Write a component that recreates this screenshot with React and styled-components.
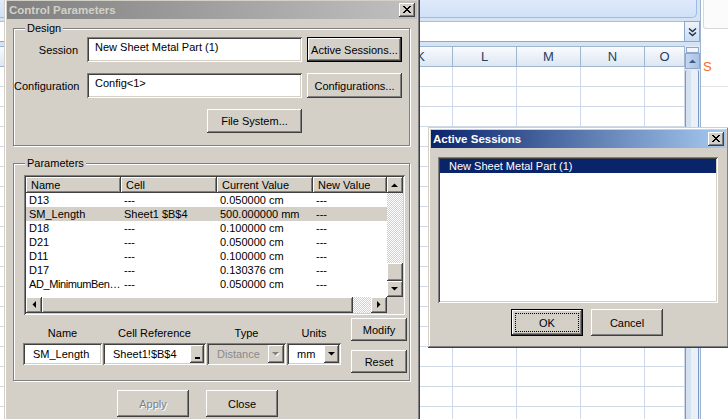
import React from 'react';
import styled, { createGlobalStyle, css } from 'styled-components';

const GlobalStyle = createGlobalStyle`
  html, body {
    margin: 0;
    padding: 0;
  }
  body {
    width: 728px;
    height: 419px;
    overflow: hidden;
    background: #fff;
    font-family: 'Liberation Sans', Arial, sans-serif;
    font-size: 11px;
    color: #000;
  }
  * {
    box-sizing: border-box;
  }
`;

// classic 3d edges
const raised = css`
  background: #d4d0c8;
  box-shadow: inset -1px -1px #404040, inset 1px 1px #fff, inset -2px -2px #808080,
    inset 2px 2px #d4d0c8;
`;

const sunken = css`
  box-shadow: inset 1px 1px #808080, inset -1px -1px #fff, inset 2px 2px #404040,
    inset -2px -2px #d4d0c8;
`;

const checker = css`
  background-color: #fff;
  background-image: conic-gradient(#d4d0c8 25%, #fff 0 50%, #d4d0c8 0 75%, #fff 0);
  background-size: 2px 2px;
`;

// columns E..J sit under the dialog, so only K..O carry a letter
const COLS = ['', '', '', '', '', '', '', 'K', 'L', 'M', 'N', 'O'];
const SHEET_ROWS = Array.from({ length: 18 }, (_, i) => i);

const params = [
  ['D13', '---', '0.050000 cm', '---'],
  ['SM_Length', 'Sheet1 $B$4', '500.000000 mm', '---'],
  ['D18', '---', '0.100000 cm', '---'],
  ['D21', '---', '0.050000 cm', '---'],
  ['D11', '---', '0.100000 cm', '---'],
  ['D17', '---', '0.130376 cm', '---'],
  ['AD_MinimumBen…', '---', '0.050000 cm', '---'],
];

/* ---------- little drawings ---------- */

const Tri = ({ dir = 'down', color = '#000', shadow }) => {
  const pts = {
    up: '0,4 7,4 3.5,0.5',
    down: '0,0 7,0 3.5,3.5',
    left: '4,0 4,7 0.5,3.5',
    right: '0,0 0,7 3.5,3.5',
  }[dir];
  const vertical = dir === 'up' || dir === 'down';
  return (
    <svg
      width={vertical ? 8 : 5}
      height={vertical ? 5 : 8}
      viewBox={vertical ? '0 0 8 5' : '0 0 5 8'}
      style={{ display: 'block', overflow: 'visible' }}
    >
      {shadow && <polygon points={pts} fill="#fff" transform="translate(1 1)" />}
      <polygon points={pts} fill={color} />
    </svg>
  );
};

const closeGlyph = [
  'XX....XX',
  '.XX..XX.',
  '..XXXX..',
  '...XX...',
  '..XXXX..',
  '.XX..XX.',
  'XX....XX',
];

const CloseX = () => (
  <svg width="8" height="7" viewBox="0 0 8 7" shapeRendering="crispEdges">
    {closeGlyph.map((row, y) =>
      row.split('').map((c, x) =>
        c === 'X' ? <rect key={`${x}-${y}`} x={x} y={y} width="1" height="1" fill="#000" /> : null
      )
    )}
  </svg>
);

const Chevrons = () => (
  <svg width="9" height="10" viewBox="0 0 9 10">
    <path d="M1 1.5 L4.5 4.5 L8 1.5 M1 5.5 L4.5 8.5 L8 5.5" stroke="#20303f" strokeWidth="1.4" fill="none" />
  </svg>
);

/* ---------- spreadsheet behind ---------- */

const Desktop = styled.div`
  position: relative;
  width: 728px;
  height: 419px;
  overflow: hidden;
  background: #fff;
`;

const Sheet = styled.div`
  display: flex;
  height: 100%;
`;

const SheetMain = styled.div`
  width: 701px;
  flex-shrink: 0;
  display: flex;
  flex-direction: column;
  background: #d5e3f5;
  border-right: 1px solid #9db4d0;
`;

const RibbonEdge = styled.div`
  height: 18px;
  flex-shrink: 0;
  margin-right: 3px;
  background: linear-gradient(#dfeafa, #cfe1f7);
  border: 1px solid #9fbbe3;
  border-top: none;
  border-left: none;
  border-radius: 0 0 5px 0;
`;

const FormulaBar = styled.div`
  display: flex;
  height: 21px;
  flex-shrink: 0;
  margin-top: 3px;
`;

const FormulaInput = styled.div`
  flex: 1;
  background: #fff;
  border-top: 1px solid #a9bfd9;
  border-bottom: 1px solid #8ea8cc;
`;

const ExpandButton = styled.div`
  width: 16px;
  display: flex;
  align-items: center;
  justify-content: center;
  background: linear-gradient(#eef4fc, #c9dcf3);
  border: 1px solid #8ea8cc;
`;

const GridArea = styled.div`
  flex: 1;
  display: flex;
  margin-top: 4px;
  min-height: 0;
`;

const Cells = styled.div`
  width: 685px;
  display: flex;
  flex-direction: column;
`;

const SheetRow = styled.div`
  display: grid;
  grid-template-columns: 5px repeat(10, 64px) 40px;
  height: ${(p) => (p.$header ? 21 : 20)}px;
  flex-shrink: 0;
  ${(p) => p.$header && 'border-top: 1px solid #9eb6ce;'}
`;

const ColHeader = styled.div`
  display: flex;
  align-items: center;
  justify-content: center;
  background: linear-gradient(#f9fbfe, #dde6f2);
  border-right: 1px solid #9eb6ce;
  border-bottom: 1px solid #9eb6ce;
  color: #27415f;
  font-size: 13px;
  overflow: hidden;
`;

const Cell = styled.div`
  background: #fff;
  border-right: 1px solid #d0d7e5;
  border-bottom: 1px solid #d0d7e5;
`;

const SheetScroll = styled.div`
  width: 15px;
  display: flex;
  flex-direction: column;
  background: #e4ecf7;
`;

const SplitBox = styled.div`
  height: 6px;
  flex-shrink: 0;
  margin: 1px 1px 0;
  border: 1px solid #8ea8cc;
  background: #f2f6fb;
`;

const SheetArrow = styled.div`
  height: 16px;
  flex-shrink: 0;
  display: flex;
  align-items: center;
  justify-content: center;
  background: linear-gradient(to right, #c5d6ee, #a9c1e3);
  border: 1px solid #8ea8cc;
`;

const SheetThumb = styled.div`
  flex: 1;
  margin-top: 1px;
  border-left: 1px solid #7c97c6;
  border-right: 1px solid #7c97c6;
  margin-right: 1px;
  background: linear-gradient(to right, #d6e1f0 0 45%, #eaf0f8 45% 100%);
  border-radius: 2px 2px 0 0;
`;

const SidePane = styled.div`
  flex: 1;
  display: flex;
  flex-direction: column;
  background: #fff;
  overflow: hidden;
`;

const PaneTab = styled.div`
  height: 29px;
  margin-left: 2px;
  width: 40px;
  flex-shrink: 0;
  border: 1px solid #d8d8d8;
  border-top: none;
  border-radius: 0 0 3px 3px;
  background: #fbfbfb;
`;

const PaneLetter = styled.div`
  margin-top: 31px;
  padding-left: 2px;
  color: #f26b1d;
  font-size: 13px;
  line-height: 14px;
`;

const PaneRule = styled.div`
  margin-top: 12px;
  border-top: 1px solid #e2e2e2;
`;

/* ---------- windows ---------- */

const Window = styled.div`
  position: absolute;
  left: ${(p) => p.$left}px;
  top: ${(p) => p.$top}px;
  width: ${(p) => p.$width}px;
  height: ${(p) => p.$height}px;
  padding: 3px;
  display: flex;
  flex-direction: column;
  background: #d4d0c8;
  box-shadow: inset -1px -1px #404040, inset 1px 1px #d4d0c8, inset -2px -2px #808080,
    inset 2px 2px #fff;
`;

const TitleBar = styled.div`
  height: 18px;
  flex-shrink: 0;
  display: flex;
  align-items: center;
  padding-left: 2px;
  background: ${(p) =>
    p.$active
      ? 'linear-gradient(to right, #0a246a, #a6caf0)'
      : 'linear-gradient(to right, #808080, #c0c0c0)'};
  color: ${(p) => (p.$active ? '#fff' : '#d4d0c8')};
  font-weight: bold;
  font-size: 11.5px;
`;

const TitleText = styled.span`
  flex: 1;
  white-space: nowrap;
`;

const CloseButton = styled.div`
  ${raised};
  width: 16px;
  height: 14px;
  margin-right: 2px;
  display: flex;
  align-items: center;
  justify-content: center;
  padding-bottom: 1px;
`;

const Btn = styled.button`
  ${raised};
  width: ${(p) => p.$w}px;
  height: ${(p) => p.$h}px;
  flex-shrink: 0;
  padding: 0;
  border: none;
  font-family: inherit;
  font-size: 11px;
  color: #000;
  white-space: nowrap;
  ${(p) =>
    p.$default &&
    css`
      box-shadow: inset 0 0 0 1px #000, inset -2px -2px #404040, inset 2px 2px #fff,
        inset -3px -3px #808080;
    `}
  ${(p) =>
    p.$focus &&
    css`
      outline: 1px dotted #000;
      outline-offset: -5px;
    `}
  &:disabled {
    color: #808080;
    text-shadow: 1px 1px #fff;
  }
`;

/* ---------- Control Parameters ---------- */

const DialogBody = styled.div`
  flex: 1;
  display: flex;
  flex-direction: column;
  padding-top: 3px;
`;

const Group = styled.fieldset`
  margin: ${(p) => p.$mt || 0}px 7px 0 6px;
  padding: 2px 0 ${(p) => p.$pb}px 0;
  min-width: 0;
  border: 1px solid #808080;
  box-shadow: 1px 1px 0 #fff, inset 1px 1px 0 #fff;
`;

const Legend = styled.legend`
  margin-left: 11px;
  padding: 0 2px;
  line-height: 13px;
  font-size: 11px;
  background: #d4d0c8;
`;

const DesignRows = styled.div`
  display: flex;
  flex-direction: column;
  gap: 11px;
`;

const FormRow = styled.div`
  display: flex;
  align-items: center;
  padding-left: ${(p) => p.$indent || 0}px;
`;

const RowLabel = styled.div`
  width: 64px;
  margin-right: 9px;
  text-align: right;
  white-space: nowrap;
`;

const TextBox = styled.div`
  ${sunken};
  width: ${(p) => p.$w}px;
  height: ${(p) => p.$h}px;
  margin-right: 5px;
  padding: 4px 0 0 8px;
  background: #fff;
  white-space: nowrap;
  overflow: hidden;
  line-height: 13px;
`;

const ListView = styled.div`
  ${sunken};
  width: 381px;
  height: 140px;
  margin: 3px 0 0 10px;
  padding: 2px;
  display: grid;
  grid-template-columns: 361px 16px;
  grid-template-rows: 120px 16px;
  background: #fff;
`;

const ListContent = styled.div`
  display: flex;
  flex-direction: column;
  overflow: hidden;
`;

const ListRow = styled.div`
  display: grid;
  grid-template-columns: 95px 96px 96px 74px;
  height: ${(p) => (p.$header ? 16 : 14)}px;
  flex-shrink: 0;
  background: ${(p) => (p.$selected ? '#d4d0c8' : 'transparent')};
`;

const HeadCell = styled.div`
  ${raised};
  padding: 2px 0 0 5px;
  line-height: 12px;
  white-space: nowrap;
  overflow: hidden;
`;

const ListCell = styled.div`
  padding-left: 3px;
  line-height: 14px;
  white-space: nowrap;
  letter-spacing: ${(p) => (p.$name ? '-0.4px' : 'normal')};
`;

const VScroll = styled.div`
  display: flex;
  flex-direction: column;
`;

const HScroll = styled.div`
  display: flex;
`;

const ScrollArrow = styled.div`
  ${raised};
  width: 16px;
  height: 16px;
  flex-shrink: 0;
  display: flex;
  align-items: center;
  justify-content: center;
`;

const ScrollTrack = styled.div`
  ${checker};
  flex: ${(p) => (p.$size ? `0 0 ${p.$size}px` : 1)};
`;

const ScrollThumb = styled.div`
  ${raised};
  flex: ${(p) => (p.$size ? `0 0 ${p.$size}px` : 1)};
`;

const Corner = styled.div`
  background: #d4d0c8;
`;

const EditArea = styled.div`
  display: flex;
  margin-top: 3px;
`;

const EditFields = styled.div`
  display: grid;
  grid-template-columns: 79px 103px 79px 54px;
  grid-template-rows: 13px 22px;
  column-gap: 1px;
  row-gap: 3px;
  margin: 9px 0 0 9px;
`;

const FieldCaption = styled.div`
  text-align: center;
  line-height: 13px;
  white-space: nowrap;
`;

const EditBox = styled.div`
  ${sunken};
  display: flex;
  align-items: center;
  padding: 2px;
  background: ${(p) => (p.$disabled ? '#d4d0c8' : '#fff')};
  color: ${(p) => (p.$disabled ? '#8a8a8a' : '#000')};
`;

const EditText = styled.span`
  flex: 1;
  padding-left: 8px;
  white-space: nowrap;
  overflow: hidden;
`;

const MiniButton = styled.div`
  ${raised};
  width: ${(p) => p.$w}px;
  height: 18px;
  flex-shrink: 0;
  display: flex;
  align-items: ${(p) => (p.$bar ? 'flex-end' : 'center')};
  justify-content: center;
  padding-bottom: ${(p) => (p.$bar ? 4 : 0)}px;
`;

const Bar = styled.div`
  width: 5px;
  height: 2px;
  background: #000;
`;

const SideButtons = styled.div`
  display: flex;
  flex-direction: column;
  gap: 9px;
  margin-left: 10px;
`;

const Footer = styled.div`
  display: flex;
  gap: 17px;
  margin: 9px 0 0 110px;
`;

/* ---------- Active Sessions ---------- */

const SessionsBody = styled.div`
  flex: 1;
  display: flex;
  flex-direction: column;
  padding: 9px 0 0 7px;
`;

const SessionList = styled.div`
  ${sunken};
  width: 280px;
  height: 146px;
  padding: 2px;
  background: #fff;
`;

const SessionItem = styled.div`
  height: 14px;
  padding-left: 9px;
  line-height: 14px;
  background: ${(p) => (p.$selected ? '#0a246a' : 'transparent')};
  color: ${(p) => (p.$selected ? '#fff' : '#000')};
  white-space: nowrap;
`;

const SessionButtons = styled.div`
  display: flex;
  gap: 8px;
  margin: 6px 0 0 73px;
`;

const App = () => {
  return (
    <>
      <GlobalStyle />
      <Desktop>
        <Sheet>
          <SheetMain>
            <RibbonEdge />
            <FormulaBar>
              <FormulaInput />
              <ExpandButton>
                <Chevrons />
              </ExpandButton>
            </FormulaBar>
            <GridArea>
              <Cells>
                <SheetRow $header>
                  {COLS.map((c, i) => (
                    <ColHeader key={i}>{c}</ColHeader>
                  ))}
                </SheetRow>
                {SHEET_ROWS.map((r) => (
                  <SheetRow key={r}>
                    {COLS.map((c, i) => (
                      <Cell key={i} />
                    ))}
                  </SheetRow>
                ))}
              </Cells>
              <SheetScroll>
                <SplitBox />
                <SheetArrow>
                  <Tri dir="up" color="#3c5a85" />
                </SheetArrow>
                <SheetThumb />
              </SheetScroll>
            </GridArea>
          </SheetMain>
          <SidePane>
            <PaneTab />
            <PaneLetter>S</PaneLetter>
            <PaneRule />
          </SidePane>
        </Sheet>

        <Window $left={4} $top={-2} $width={416} $height={430}>
          <TitleBar>
            <TitleText>Control Parameters</TitleText>
            <CloseButton>
              <CloseX />
            </CloseButton>
          </TitleBar>
          <DialogBody>
            <Group $pb={12}>
              <Legend>Design</Legend>
              <DesignRows>
                <FormRow>
                  <RowLabel>Session</RowLabel>
                  <TextBox $w={215} $h={25}>New Sheet Metal Part (1)</TextBox>
                  <Btn $w={95} $h={25} $default>
                    Active Sessions...
                  </Btn>
                </FormRow>
                <FormRow>
                  <RowLabel>Configuration</RowLabel>
                  <TextBox $w={215} $h={25}>Config&lt;1&gt;</TextBox>
                  <Btn $w={95} $h={25}>
                    Configurations...
                  </Btn>
                </FormRow>
                <FormRow $indent={193}>
                  <Btn $w={95} $h={24}>
                    File System...
                  </Btn>
                </FormRow>
              </DesignRows>
            </Group>

            <Group $mt={11} $pb={7}>
              <Legend>Parameters</Legend>
              <ListView>
                <ListContent>
                  <ListRow $header>
                    <HeadCell>Name</HeadCell>
                    <HeadCell>Cell</HeadCell>
                    <HeadCell>Current Value</HeadCell>
                    <HeadCell>New Value</HeadCell>
                  </ListRow>
                  {params.map((row) => (
                    <ListRow key={row[0]} $selected={row[0] === 'SM_Length'}>
                      {row.map((v, i) => (
                        <ListCell key={i} $name={i === 0 && v.length > 12}>
                          {v}
                        </ListCell>
                      ))}
                    </ListRow>
                  ))}
                </ListContent>
                <VScroll>
                  <ScrollArrow>
                    <Tri dir="up" />
                  </ScrollArrow>
                  <ScrollTrack />
                  <ScrollThumb $size={18} />
                  <ScrollArrow>
                    <Tri dir="down" />
                  </ScrollArrow>
                </VScroll>
                <HScroll>
                  <ScrollArrow>
                    <Tri dir="left" />
                  </ScrollArrow>
                  <ScrollThumb />
                  <ScrollTrack $size={18} />
                  <ScrollArrow>
                    <Tri dir="right" />
                  </ScrollArrow>
                </HScroll>
                <Corner />
              </ListView>

              <EditArea>
                <EditFields>
                  <FieldCaption>Name</FieldCaption>
                  <FieldCaption>Cell Reference</FieldCaption>
                  <FieldCaption>Type</FieldCaption>
                  <FieldCaption>Units</FieldCaption>
                  <EditBox>
                    <EditText>SM_Length</EditText>
                  </EditBox>
                  <EditBox>
                    <EditText>Sheet1!$B$4</EditText>
                    <MiniButton $w={14} $bar>
                      <Bar />
                    </MiniButton>
                  </EditBox>
                  <EditBox $disabled>
                    <EditText>Distance</EditText>
                    <MiniButton $w={16}>
                      <Tri dir="down" color="#808080" shadow />
                    </MiniButton>
                  </EditBox>
                  <EditBox>
                    <EditText>mm</EditText>
                    <MiniButton $w={15}>
                      <Tri dir="down" />
                    </MiniButton>
                  </EditBox>
                </EditFields>
                <SideButtons>
                  <Btn $w={56} $h={23}>
                    Modify
                  </Btn>
                  <Btn $w={56} $h={23}>
                    Reset
                  </Btn>
                </SideButtons>
              </EditArea>
            </Group>

            <Footer>
              <Btn $w={72} $h={27} disabled>
                Apply
              </Btn>
              <Btn $w={72} $h={27}>
                Close
              </Btn>
            </Footer>
          </DialogBody>
        </Window>

        <Window $left={428} $top={127} $width={301} $height={221}>
          <TitleBar $active>
            <TitleText>Active Sessions</TitleText>
            <CloseButton>
              <CloseX />
            </CloseButton>
          </TitleBar>
          <SessionsBody>
            <SessionList>
              <SessionItem $selected>New Sheet Metal Part (1)</SessionItem>
            </SessionList>
            <SessionButtons>
              <Btn $w={72} $h={27} $default $focus>
                OK
              </Btn>
              <Btn $w={72} $h={27}>
                Cancel
              </Btn>
            </SessionButtons>
          </SessionsBody>
        </Window>
      </Desktop>
    </>
  );
};

export default App;
